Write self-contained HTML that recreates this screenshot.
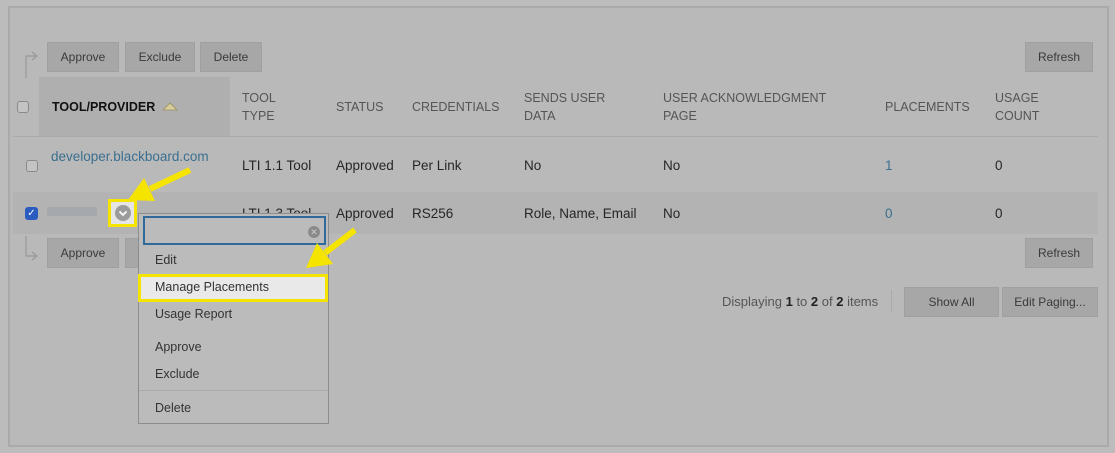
<!DOCTYPE html>
<html><head><style>
*{box-sizing:border-box;margin:0;padding:0}
body{width:1115px;height:453px;background:#bcbcbc;font-family:"Liberation Sans",sans-serif;position:relative;overflow:hidden;color:#333}
.a{position:absolute}
.box{left:8px;top:6px;width:1101px;height:441px;border:2px solid #aaa;background:#b9b9b9}
.btn{position:absolute;background:#a7a7a7;border:1px solid #a0a0a0;font-size:12px;color:#3a3a3a;text-align:center;height:30px;line-height:28px}
.h{font-size:12.5px;color:#555;line-height:18px}
.t{font-size:13.5px;color:#262626}
.cb{position:absolute;width:12px;height:12px;border:1px solid #8a8a8a;border-radius:3px;background:#c4c4c4}
.menu{left:138px;top:213px;width:191px;height:211px;border:1px solid #8d8d8d;background:#bbb}
.mi{position:absolute;left:16px;font-size:12.5px;color:#333}
</style></head><body>
<div class="a box"></div>
<svg class="a" style="left:22px;top:50px" width="20" height="30"><path d="M4 28V6h10M10 2l5 4-5 4" fill="none" stroke="#999" stroke-width="1.2"/></svg>
<div class="btn" style="left:47px;top:42px;width:72px">Approve</div>
<div class="btn" style="left:125px;top:42px;width:70px">Exclude</div>
<div class="btn" style="left:200px;top:42px;width:62px">Delete</div>
<div class="btn" style="left:1025px;top:42px;width:68px">Refresh</div>
<div class="a" style="left:39px;top:77px;width:191px;height:60px;background:#afafaf"></div>
<div class="cb" style="left:17px;top:101px"></div>
<div class="a" style="left:52px;top:100px;font-size:12.5px;font-weight:bold;color:#111">TOOL/PROVIDER</div>
<svg class="a" style="left:162px;top:101px" width="16" height="10"><path d="M1 9L8 2l7 7z" fill="#d8cc98" stroke="#9a8f66" stroke-width="0.8"/></svg>
<div class="a h" style="left:242px;top:89px">TOOL<br>TYPE</div>
<div class="a h" style="left:336px;top:98px">STATUS</div>
<div class="a h" style="left:412px;top:98px">CREDENTIALS</div>
<div class="a h" style="left:524px;top:89px">SENDS USER<br>DATA</div>
<div class="a h" style="left:663px;top:89px">USER ACKNOWLEDGMENT<br>PAGE</div>
<div class="a h" style="left:885px;top:98px">PLACEMENTS</div>
<div class="a h" style="left:995px;top:89px">USAGE<br>COUNT</div>
<div class="a" style="left:13px;top:136px;width:1085px;height:1px;background:#aaa"></div>
<div class="cb" style="left:26px;top:160px"></div>
<div class="a" style="left:51px;top:149px;font-size:13.5px;color:#3b6f8f">developer.blackboard.com</div>
<div class="a t" style="left:242px;top:158px">LTI 1.1 Tool</div>
<div class="a t" style="left:336px;top:158px">Approved</div>
<div class="a t" style="left:412px;top:158px">Per Link</div>
<div class="a t" style="left:524px;top:158px">No</div>
<div class="a t" style="left:663px;top:158px">No</div>
<div class="a t" style="left:885px;top:158px;color:#3b6f8f">1</div>
<div class="a t" style="left:995px;top:158px">0</div>
<div class="a" style="left:13px;top:192px;width:1085px;height:42px;background:#b3b3b3"></div>
<div class="a" style="left:25px;top:207px;width:13px;height:13px;border-radius:3px;background:#2a5bbf;color:#fff;font-size:10px;line-height:13px;text-align:center">✓</div>
<div class="a" style="left:47px;top:207px;width:50px;height:9px;background:#a5a8ad"></div>
<div class="a t" style="left:242px;top:206px">LTI 1.3 Tool</div>
<div class="a t" style="left:336px;top:206px">Approved</div>
<div class="a t" style="left:412px;top:206px">RS256</div>
<div class="a t" style="left:524px;top:206px">Role, Name, Email</div>
<div class="a t" style="left:663px;top:206px">No</div>
<div class="a t" style="left:885px;top:206px;color:#3b6f8f">0</div>
<div class="a t" style="left:995px;top:206px">0</div>
<svg class="a" style="left:22px;top:234px" width="20" height="30"><path d="M4 2v20h10M10 18l5 4-5 4" fill="none" stroke="#999" stroke-width="1.2"/></svg>
<div class="btn" style="left:47px;top:238px;width:72px">Approve</div>
<div class="btn" style="left:125px;top:238px;width:70px"></div>
<div class="btn" style="left:1025px;top:238px;width:68px">Refresh</div>
<div class="a" style="left:722px;top:294px;font-size:13px;color:#555">Displaying <b style="color:#222">1</b> to <b style="color:#222">2</b> of <b style="color:#222">2</b> items</div>
<div class="a" style="left:891px;top:290px;width:1px;height:22px;background:#aaa"></div>
<div class="btn" style="left:904px;top:287px;width:95px">Show All</div>
<div class="btn" style="left:1002px;top:287px;width:96px">Edit Paging...</div>
<div class="a menu">
<div class="a" style="left:4px;top:2px;width:183px;height:29px;border:2px solid #2f6a9a"></div>
<div class="a" style="left:169px;top:12px;width:12px;height:12px;border-radius:50%;background:#8a8a8a;color:#ccc;font-size:9px;line-height:12px;text-align:center">✕</div>
<div class="mi" style="top:39px">Edit</div>
<div class="a" style="left:-1px;top:60px;width:190px;height:28px;border:3px solid #f5e400;background:#e9e9e9"></div>
<div class="mi" style="top:66px">Manage Placements</div>
<div class="mi" style="top:93px">Usage Report</div>
<div class="mi" style="top:126px">Approve</div>
<div class="mi" style="top:153px">Exclude</div>
<div class="a" style="left:0;top:176px;width:189px;height:1px;background:#aaa"></div>
<div class="mi" style="top:187px">Delete</div>
</div>
<div class="a" style="left:108px;top:199px;width:29px;height:28px;border:3px solid #f5e400;background:#e5e5e5"></div>
<svg class="a" style="left:114px;top:204px" width="18" height="18"><circle cx="9" cy="9" r="8" fill="#9b9b9b"/><path d="M5.5 7.5L9 11l3.5-3.5" fill="none" stroke="#f2f2f2" stroke-width="2"/></svg>
<svg class="a" style="left:0;top:0" width="1115" height="453">
<path d="M190 170L150 189" stroke="#f5e400" stroke-width="6"/>
<polygon points="128,200 155,201 144,178" fill="#f5e400"/>
<path d="M355 230L325 253" stroke="#f5e400" stroke-width="6"/>
<polygon points="306,268 333,264 317,243" fill="#f5e400"/>
</svg>
</body></html>
